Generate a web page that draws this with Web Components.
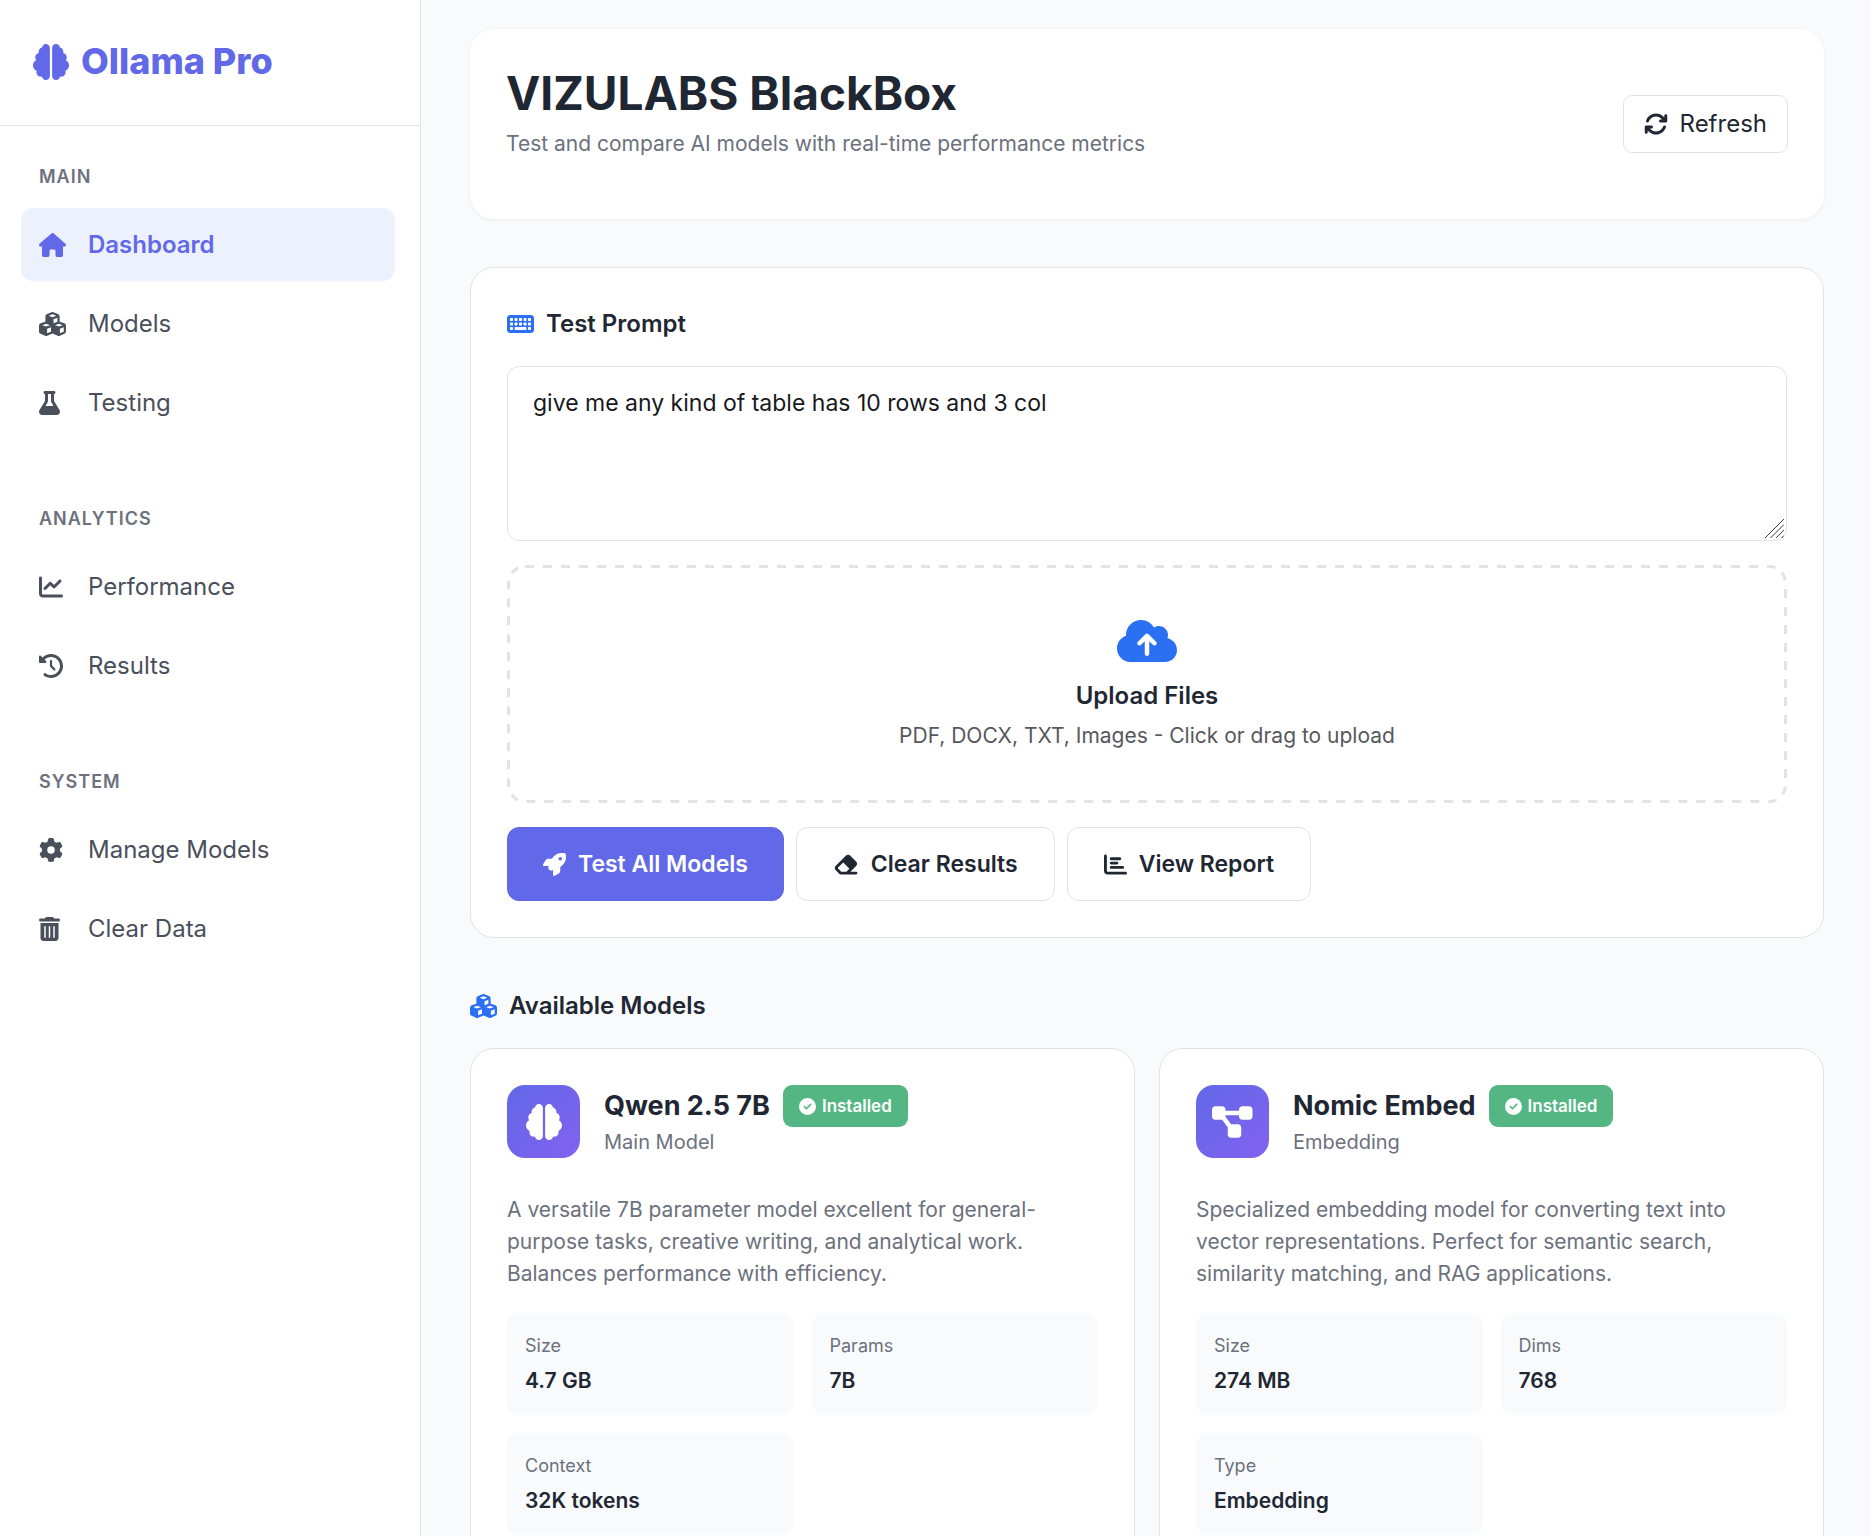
<!DOCTYPE html>
<html lang="en">
<head>
<meta charset="utf-8">
<meta name="viewport" content="width=device-width, initial-scale=1">
<title>Ollama Pro</title>
<style>
  :root {
    --primary: #6169e8;
    --primary-soft: #edf1fd;
    --accent: #2b6ff2;
    --success: #53b683;
    --ink: #1f2733;
    --ink-2: #4a505b;
    --muted: #6c717d;
    --line: #e1e3e7;
    --surface: #ffffff;
    --page: #f9fafc;
  }
  body {
    margin: 0;
    background: var(--page);
    color: var(--ink);
    font-family: Inter, "Liberation Sans", sans-serif;
    font-size: 24px;
  }
</style>
</head>
<body>
<app-shell>
  <side-bar slot="sidebar" brand="Ollama Pro">
    <nav-section label="Main">
      <nav-item icon="house" active>Dashboard</nav-item>
      <nav-item icon="cubes">Models</nav-item>
      <nav-item icon="flask">Testing</nav-item>
    </nav-section>
    <nav-section label="Analytics">
      <nav-item icon="chart-line">Performance</nav-item>
      <nav-item icon="history">Results</nav-item>
    </nav-section>
    <nav-section label="System">
      <nav-item icon="gear">Manage Models</nav-item>
      <nav-item icon="trash">Clear Data</nav-item>
    </nav-section>
  </side-bar>

  <page-header>
    <span slot="title">VIZULABS BlackBox</span>
    <span slot="subtitle">Test and compare AI models with real-time performance metrics</span>
    <ui-button slot="actions" icon="rotate" small>Refresh</ui-button>
  </page-header>

  <prompt-panel>give me any kind of table has 10 rows and 3 col</prompt-panel>

  <model-list>
    <model-card icon="brain" name="Qwen 2.5 7B" kind="Main Model">
      A versatile 7B parameter model excellent for general-purpose tasks, creative writing, and analytical work. Balances performance with efficiency.
      <model-stat slot="stats" label="Size">4.7 GB</model-stat>
      <model-stat slot="stats" label="Params">7B</model-stat>
      <model-stat slot="stats" label="Context">32K tokens</model-stat>
    </model-card>
    <model-card icon="diagram" name="Nomic Embed" kind="Embedding">
      Specialized embedding model for converting text into vector representations. Perfect for semantic search, similarity matching, and RAG applications.
      <model-stat slot="stats" label="Size">274 MB</model-stat>
      <model-stat slot="stats" label="Dims">768</model-stat>
      <model-stat slot="stats" label="Type">Embedding</model-stat>
    </model-card>
  </model-list>
</app-shell>

<script>
;(() => {
  // One rounded key of the keyboard icon
  const key = (x, y, w = 32) =>
    `M${x} ${y}h${w}a16 16 0 0 1 16 16v32a16 16 0 0 1-16 16h-${w}a16 16 0 0 1-16-16v-32a16 16 0 0 1 16-16z`

  const keys = [80, 176, 272, 368, 464]
    .map(x => key(x, 128) + key(x, 224))
    .join("")

  // name: [viewBox width, path]; every icon is 512 high
  const icons = {
    brain: [512, "M184 0c30.9 0 56 25.1 56 56V456c0 30.9-25.1 56-56 56c-28.9 0-52.7-21.9-55.7-50.1c-5.2 1.4-10.7 2.1-16.3 2.1c-35.3 0-64-28.7-64-64c0-7.4 1.3-14.6 3.6-21.2C21.4 367.4 0 338.2 0 304c0-31.9 18.7-59.5 45.8-72.3C37.1 220.8 32 207 32 192c0-30.7 21.6-56.3 50.4-62.6C80.8 123.9 80 118 80 112c0-29.9 20.6-55.1 48.3-62.1C131.3 21.9 155.1 0 184 0zM328 0c28.9 0 52.6 21.9 55.7 49.9c27.8 7 48.3 32.1 48.3 62.1c0 6-.8 11.9-2.4 17.4c28.8 6.2 50.4 31.9 50.4 62.6c0 15-5.1 28.8-13.8 39.7C493.3 244.5 512 272.1 512 304c0 34.2-21.4 63.4-51.6 74.8c2.3 6.6 3.6 13.8 3.6 21.2c0 35.3-28.7 64-64 64c-5.6 0-11.1-.7-16.3-2.1c-3 28.2-26.8 50.1-55.7 50.1c-30.9 0-56-25.1-56-56V56c0-30.9 25.1-56 56-56z"],
    house: [576, "M575.8 255.5c0 18-15 32.1-32 32.1h-32l.7 160.2c0 2.7-.2 5.4-.5 8.1V472c0 22.1-17.9 40-40 40H456c-1.1 0-2.2 0-3.3-.1c-1.4 .1-2.8 .1-4.2 .1H416 392c-22.1 0-40-17.9-40-40V448 384c0-17.7-14.3-32-32-32H256c-17.7 0-32 14.3-32 32v64 24c0 22.1-17.9 40-40 40H160 128.1c-1.5 0-3-.1-4.5-.2c-1.2 .1-2.4 .2-3.6 .2H104c-22.1 0-40-17.9-40-40V360c0-.9 0-1.9 .1-2.8V287.6H32c-18 0-32-14-32-32.1c0-9 3-17 10-24L266.4 8c7-7 15-8 22-8s15 2 21 7L564.8 231.5c8 7 12 15 11 24z"],
    cubes: [576, "M290.8 48.6l78.4 29.7L288 109.5 206.8 78.3l78.4-29.7c1.8-.7 3.8-.7 5.7 0zM136 92.5V204.7c-1.3 .4-2.6 .8-3.9 1.3l-96 36.4C14.4 250.6 0 271.5 0 294.7V413.9c0 22.2 13.1 42.3 33.5 51.3l96 42.2c14.4 6.3 30.7 6.3 45.1 0L288 457.5l113.5 49.9c14.4 6.3 30.7 6.3 45.1 0l96-42.2c20.3-8.9 33.5-29.1 33.5-51.3V294.7c0-23.3-14.4-44.1-36.1-52.4l-96-36.4c-1.3-.5-2.6-.9-3.9-1.3V92.5c0-23.3-14.4-44.1-36.1-52.4l-96-36.4c-12.8-4.8-26.9-4.8-39.7 0l-96 36.4C150.4 48.4 136 69.3 136 92.5zM392 210.6l-82.4 31.2V152.6L392 121v89.6zM154.8 250.9l78.4 29.7L152 311.7 70.8 280.6l78.4-29.7c1.8-.7 3.8-.7 5.7 0zm18.8 204.4V354.8L256 323.2v95.9l-82.4 36.2zM421.2 250.9c1.8-.7 3.8-.7 5.7 0l78.4 29.7L424 311.7l-81.2-31.1 78.4-29.7zM523.2 421.2l-77.6 34.1V354.8L528 323.2v90.7c0 3.2-1.9 6-4.8 7.3z"],
    flask: [448, "M288 0H160 128C110.3 0 96 14.3 96 32s14.3 32 32 32V196.8c0 11.8-3.3 23.5-9.5 33.5L10.3 406.2C3.6 417.2 0 429.7 0 442.6C0 480.9 31.1 512 69.4 512H378.6c38.3 0 69.4-31.1 69.4-69.4c0-12.8-3.6-25.4-10.3-36.4L329.5 230.4c-6.2-10.1-9.5-21.7-9.5-33.5V64c17.7 0 32-14.3 32-32s-14.3-32-32-32H288zM192 196.8V64h64V196.8c0 23.7 6.6 46.9 19 67.1L309.5 320h-171L173 263.9c12.4-20.2 19-43.4 19-67.1z"],
    "chart-line": [512, "M64 64c0-17.7-14.3-32-32-32S0 46.3 0 64V400c0 44.2 35.8 80 80 80H480c17.7 0 32-14.3 32-32s-14.3-32-32-32H80c-8.8 0-16-7.2-16-16V64zm406.6 86.6c12.5-12.5 12.5-32.8 0-45.3s-32.8-12.5-45.3 0L320 210.7l-57.4-57.4c-12.5-12.5-32.8-12.5-45.3 0l-112 112c-12.5 12.5-12.5 32.8 0 45.3s32.8 12.5 45.3 0L240 221.3l57.4 57.4c12.5 12.5 32.8 12.5 45.3 0l128-128z"],
    history: [512, "M75 75L41 41C25.9 25.9 0 36.6 0 57.9V168c0 13.3 10.7 24 24 24H134.1c21.4 0 32.1-25.9 17-41l-30.8-30.8C155 85.5 203 64 256 64c106 0 192 86 192 192s-86 192-192 192c-40.8 0-78.6-12.7-109.7-34.4c-14.5-10.1-34.4-6.6-44.6 7.9s-6.6 34.4 7.9 44.6C151.2 495 201.7 512 256 512c141.4 0 256-114.6 256-256S397.4 0 256 0C185.3 0 121.3 28.7 75 75zm181 53c-13.3 0-24 10.7-24 24V256c0 6.4 2.5 12.5 7 17l72 72c9.4 9.4 24.6 9.4 33.9 0s9.4-24.6 0-33.9l-65-65V152c0-13.3-10.7-24-24-24z"],
    gear: [512, "M495.9 166.6c3.2 8.7 .5 18.4-6.4 24.6l-43.3 39.4c1.1 8.3 1.7 16.8 1.7 25.4s-.6 17.1-1.7 25.4l43.3 39.4c6.9 6.2 9.6 15.9 6.4 24.6c-4.4 11.9-9.7 23.3-15.8 34.3l-4.7 8.1c-6.6 11-14 21.4-22.1 31.2c-5.9 7.2-15.7 9.6-24.5 6.8l-55.7-17.7c-13.4 10.3-28.2 18.9-44 25.4l-12.5 57.1c-2 9.1-9 16.3-18.2 17.8c-13.8 2.3-28 3.5-42.5 3.5s-28.7-1.2-42.5-3.5c-9.2-1.5-16.2-8.7-18.2-17.8l-12.5-57.1c-15.8-6.5-30.6-15.1-44-25.4L83.1 425.9c-8.8 2.8-18.6 .3-24.5-6.8c-8.1-9.8-15.5-20.2-22.1-31.2l-4.7-8.1c-6.1-11-11.4-22.4-15.8-34.3c-3.2-8.7-.5-18.4 6.4-24.6l43.3-39.4C64.6 273.1 64 264.6 64 256s.6-17.1 1.7-25.4L22.4 191.2c-6.9-6.2-9.6-15.9-6.4-24.6c4.4-11.9 9.7-23.3 15.8-34.3l4.7-8.1c6.6-11 14-21.4 22.1-31.2c5.9-7.2 15.7-9.6 24.5-6.8l55.7 17.7c13.4-10.3 28.2-18.9 44-25.4l12.5-57.1c2-9.1 9-16.3 18.2-17.8C227.3 1.2 241.5 0 256 0s28.7 1.2 42.5 3.5c9.2 1.5 16.2 8.7 18.2 17.8l12.5 57.1c15.8 6.5 30.6 15.1 44 25.4l55.7-17.7c8.8-2.8 18.6-.3 24.5 6.8c8.1 9.8 15.5 20.2 22.1 31.2l4.7 8.1c6.1 11 11.4 22.4 15.8 34.3zM256 336a80 80 0 1 0 0-160 80 80 0 1 0 0 160z"],
    trash: [448, "M135.2 17.7C140.6 6.8 151.7 0 163.8 0H284.2c12.1 0 23.2 6.8 28.6 17.7L320 32h96c17.7 0 32 14.3 32 32s-14.3 32-32 32H32C14.3 96 0 81.7 0 64S14.3 32 32 32h96l7.2-14.3zM32 128H416V448c0 35.3-28.7 64-64 64H96c-35.3 0-64-28.7-64-64V128zm96 64c-8.8 0-16 7.2-16 16V432c0 8.8 7.2 16 16 16s16-7.2 16-16V208c0-8.8-7.2-16-16-16zm96 0c-8.8 0-16 7.2-16 16V432c0 8.8 7.2 16 16 16s16-7.2 16-16V208c0-8.8-7.2-16-16-16zm96 0c-8.8 0-16 7.2-16 16V432c0 8.8 7.2 16 16 16s16-7.2 16-16V208c0-8.8-7.2-16-16-16z"],
    rotate: [512, "M105.1 202.6c7.7-21.8 20.2-42.3 37.8-59.8c62.5-62.5 163.8-62.5 226.3 0L386.3 160H352c-17.7 0-32 14.3-32 32s14.3 32 32 32H463.5c0 0 0 0 0 0h.4c17.7 0 32-14.3 32-32V80c0-17.7-14.3-32-32-32s-32 14.3-32 32v35.2L414.4 97.6c-87.5-87.5-229.3-87.5-316.8 0C73.2 122 55.6 150.7 44.8 181.4c-5.9 16.7 2.9 34.9 19.5 40.8s34.9-2.9 40.8-19.5zM39 289.3c-5 1.5-9.8 4.2-13.7 8.2c-4 4-6.7 8.8-8.1 14c-.3 1.2-.6 2.5-.8 3.8c-.3 1.7-.4 3.4-.4 5.1V432c0 17.7 14.3 32 32 32s32-14.3 32-32V396.9l17.6 17.5 0 0c87.5 87.4 229.3 87.4 316.7 0c24.4-24.4 42.1-53.1 52.9-83.7c5.9-16.7-2.9-34.9-19.5-40.8s-34.9 2.9-40.8 19.5c-7.7 21.8-20.2 42.3-37.8 59.8c-62.5 62.5-163.8 62.5-226.3 0l-.1-.1L125.6 352H160c17.7 0 32-14.3 32-32s-14.3-32-32-32H48.4c-1.6 0-3.2 .1-4.8 .3s-3.1 .5-4.6 1z"],
    keyboard: [576, `M64 64C28.7 64 0 92.7 0 128V384c0 35.3 28.7 64 64 64H512c35.3 0 64-28.7 64-64V128c0-35.3-28.7-64-64-64H64z${keys}${key(80, 320)}${key(176, 320, 224)}${key(464, 320)}`],
    "cloud-up": [640, "M144 480C64.5 480 0 415.5 0 336c0-62.8 40.2-116.2 96.2-135.9c-.1-2.7-.2-5.4-.2-8.1c0-88.4 71.6-160 160-160c59.3 0 111 32.2 138.7 80.2C409.9 102 428.3 96 448 96c53 0 96 43 96 96c0 12.2-2.3 23.8-6.4 34.6C596 238.4 640 290.1 640 352c0 70.7-57.3 128-128 128H144zm79-217c-9.4 9.4-9.4 24.6 0 33.9s24.6 9.4 33.9 0l39-39V392c0 13.3 10.7 24 24 24s24-10.7 24-24V257.9l39 39c9.4 9.4 24.6 9.4 33.9 0s9.4-24.6 0-33.9l-80-80c-9.4-9.4-24.6-9.4-33.9 0l-80 80z"],
    rocket: [512, "M156.6 384.9L125.7 354c-8.5-8.5-11.5-20.8-7.7-32.2c3-8.9 7-20.5 11.8-33.8L24 288c-8.6 0-16.6-4.6-20.9-12.1s-4.2-16.7 .2-24.1l52.5-88.5c13-21.9 36.5-35.3 61.9-35.3l82.3 0c2.4-4 4.8-7.7 7.2-11.3C289.1-4.1 411.1-8.1 483.9 5.3c11.6 2.1 20.6 11.2 22.8 22.8c13.4 72.9 9.3 194.8-111.4 276.7c-3.5 2.4-7.3 4.8-11.3 7.2v82.3c0 25.4-13.4 49-35.3 61.9l-88.5 52.5c-7.4 4.4-16.6 4.5-24.1 .2s-12.1-12.2-12.1-20.9V380.8c-14.1 4.9-26.4 8.9-35.7 11.9c-11.2 3.6-23.4 .5-31.8-7.8zM384 168a40 40 0 1 0 0-80 40 40 0 1 0 0 80z"],
    eraser: [576, "M290.7 57.4L57.4 290.7c-25 25-25 65.5 0 90.5l80 80c12 12 28.3 18.7 45.3 18.7H288h9.4H512c17.7 0 32-14.3 32-32s-14.3-32-32-32H387.9L518.6 285.3c25-25 25-65.5 0-90.5L381.3 57.4c-25-25-65.5-25-90.5 0zM297.4 416H288l-105.4 0-80-80L227.3 211.3 364.7 348.7 297.4 416z"],
    "chart-bar": [512, "M32 32c17.7 0 32 14.3 32 32V400c0 8.8 7.2 16 16 16H480c17.7 0 32 14.3 32 32s-14.3 32-32 32H80c-44.2 0-80-35.8-80-80V64C0 46.3 14.3 32 32 32zm96 96c0-17.7 14.3-32 32-32l192 0c17.7 0 32 14.3 32 32s-14.3 32-32 32H160c-17.7 0-32-14.3-32-32zm32 64H288c17.7 0 32 14.3 32 32s-14.3 32-32 32H160c-17.7 0-32-14.3-32-32s14.3-32 32-32zm0 96H416c17.7 0 32 14.3 32 32s-14.3 32-32 32H160c-17.7 0-32-14.3-32-32s14.3-32 32-32z"],
    check: [512, "M256 512A256 256 0 1 0 256 0a256 256 0 1 0 0 512zM369 209L241 337c-9.4 9.4-24.6 9.4-33.9 0l-64-64c-9.4-9.4-9.4-24.6 0-33.9s24.6-9.4 33.9 0l47 47L335 175c9.4-9.4 24.6-9.4 33.9 0s9.4 24.6 0 33.9z"],
    diagram: [576, "M0 80C0 53.5 21.5 32 48 32h96c26.5 0 48 21.5 48 48V96H384V80c0-26.5 21.5-48 48-48h96c26.5 0 48 21.5 48 48v96c0 26.5-21.5 48-48 48H432c-26.5 0-48-21.5-48-48V160H192v16c0 1.7-.1 3.4-.3 5L272 288h96c26.5 0 48 21.5 48 48v96c0 26.5-21.5 48-48 48H272c-26.5 0-48-21.5-48-48V336c0-1.7 .1-3.4 .3-5L144 224H48c-26.5 0-48-21.5-48-48V80z"]
  }

  // Shared base: renders the subclass markup into an open shadow root
  class View extends HTMLElement {
    connectedCallback() {
      if (this.shadowRoot) return
      this.attachShadow({ mode: "open" }).innerHTML = this.render()
    }
    attr(name) {
      return this.getAttribute(name) || ""
    }
  }

  class AppIcon extends View {
    render() {
      const [width, path] = icons[this.attr("name")]
      return `
      <style>
        :host { display: block; flex: none; }
        svg { display: block; height: 1em; fill: currentColor; fill-rule: evenodd; }
      </style>
      <svg viewBox="0 0 ${width} 512" aria-hidden="true"><path d="${path}"/></svg>`
    }
  }

  class AppShell extends View {
    render() {
      return `
      <style>
        :host { display: flex; height: 100vh; overflow: hidden; }
        main {
          flex: 1;
          min-width: 0;
          box-sizing: border-box;
          display: flex;
          flex-direction: column;
          gap: 48px;
          padding: 29px 47px 48px 49px;
          overflow-y: auto;
          scrollbar-width: none;
        }
      </style>
      <slot name="sidebar"></slot>
      <main><slot></slot></main>`
    }
  }

  class SideBar extends View {
    render() {
      return `
      <style>
        :host {
          display: block;
          flex: none;
          box-sizing: border-box;
          width: 421px;
          background: var(--surface);
          border-right: 1px solid var(--line);
        }
        header {
          display: flex;
          align-items: center;
          gap: 12px;
          padding: 32px 33px 34px;
          border-bottom: 1px solid var(--line);
          color: var(--primary);
          font-size: 36px;
          font-weight: 800;
          line-height: 59px;
        }
        nav {
          display: flex;
          flex-direction: column;
          gap: 65px;
          padding: 36px 25px 36px 21px;
        }
      </style>
      <header><app-icon name="brain"></app-icon><span>${this.attr("brand")}</span></header>
      <nav><slot></slot></nav>`
    }
  }

  class NavSection extends View {
    render() {
      return `
      <style>
        :host { display: flex; flex-direction: column; gap: 6px; }
        h2 {
          margin: 0 0 11px;
          padding: 0 18px;
          color: var(--muted);
          font-size: 18px;
          font-weight: 600;
          line-height: 29px;
          letter-spacing: 1px;
          text-transform: uppercase;
        }
      </style>
      <h2>${this.attr("label")}</h2>
      <slot></slot>`
    }
  }

  class NavItem extends View {
    render() {
      return `
      <style>
        :host { display: block; }
        a {
          display: grid;
          grid-template-columns: 31px 1fr;
          gap: 18px;
          align-items: center;
          padding: 17px 18px;
          border-radius: 12px;
          color: var(--ink-2);
          font-size: 24px;
          line-height: 39px;
          text-decoration: none;
        }
        :host([active]) a {
          background: var(--primary-soft);
          color: var(--primary);
          font-weight: 600;
        }
      </style>
      <a href="#"><app-icon name="${this.attr("icon")}"></app-icon><slot></slot></a>`
    }
  }

  class UiButton extends View {
    render() {
      return `
      <style>
        :host { display: block; }
        button {
          display: flex;
          align-items: center;
          gap: 12px;
          padding: 18px 36px;
          border: 1px solid var(--line);
          border-radius: 12px;
          background: var(--surface);
          color: var(--ink);
          font: 600 23px/36px Inter, "Liberation Sans", sans-serif;
          cursor: pointer;
        }
        :host([primary]) button {
          padding: 18px 35px;
          background: var(--primary);
          border-color: var(--primary);
          color: #fff;
        }
        :host([small]) button {
          padding: 10px 20px;
          border-radius: 9px;
          font-size: 24px;
          font-weight: 400;
        }
      </style>
      <button type="button"><app-icon name="${this.attr("icon")}"></app-icon><slot></slot></button>`
    }
  }

  class PageHeader extends View {
    render() {
      return `
      <style>
        :host {
          display: flex;
          align-items: center;
          justify-content: space-between;
          padding: 36px;
          border-radius: 24px;
          background: var(--surface);
          box-shadow: 0 1px 4px rgba(31, 39, 51, 0.06);
        }
        h1 {
          margin: 0 0 6px;
          font-size: 46px;
          font-weight: 700;
          line-height: 56px;
        }
        p {
          margin: 0 0 23px;
          color: var(--muted);
          font-size: 21px;
          line-height: 33px;
        }
      </style>
      <div>
        <h1><slot name="title"></slot></h1>
        <p><slot name="subtitle"></slot></p>
      </div>
      <slot name="actions"></slot>`
    }
  }

  class SectionTitle extends View {
    render() {
      return `
      <style>
        :host { display: block; }
        h2 {
          display: flex;
          align-items: center;
          gap: 12px;
          margin: 0 0 22px;
          font-size: 24px;
          font-weight: 600;
          line-height: 40px;
        }
        app-icon { color: var(--accent); }
      </style>
      <h2><app-icon name="${this.attr("icon")}"></app-icon><slot></slot></h2>`
    }
  }

  class UploadZone extends View {
    render() {
      return `
      <style>
        :host { display: block; }
        label {
          position: relative;
          display: flex;
          flex-direction: column;
          align-items: center;
          padding: 52px 51px 50px;
          border-radius: 18px;
          overflow: hidden;
          cursor: pointer;
        }
        input { display: none; }
        /* the outer half of the stroke is clipped by the label's rounded box */
        .dashes {
          position: absolute;
          inset: 0;
          width: 100%;
          height: 100%;
          fill: none;
          stroke: var(--line);
          stroke-width: 6;
          stroke-dasharray: 9;
        }
        app-icon { color: var(--accent); font-size: 48px; }
        strong { margin: 12px 0 4px; font-size: 24px; font-weight: 600; line-height: 38px; }
        small { color: #56585d; font-size: 21px; line-height: 34px; }
      </style>
      <label>
        <svg class="dashes" aria-hidden="true"><rect width="100%" height="100%" rx="18"/></svg>
        <app-icon name="cloud-up"></app-icon>
        <strong>Upload Files</strong>
        <small>PDF, DOCX, TXT, Images - Click or drag to upload</small>
        <input type="file" multiple>
      </label>`
    }
  }

  class PromptPanel extends View {
    render() {
      return `
      <style>
        :host {
          display: block;
          padding: 36px;
          border: 1px solid var(--line);
          border-radius: 24px;
          background: var(--surface);
        }
        .field { position: relative; margin-bottom: 24px; }
        textarea {
          display: block;
          box-sizing: border-box;
          width: 100%;
          height: 175px;
          padding: 19px 25px;
          border: 1px solid var(--line);
          border-radius: 12px;
          background: var(--surface);
          color: #17191d;
          font: 400 23px/34px Inter, "Liberation Sans", sans-serif;
          resize: vertical;
        }
        textarea::-webkit-resizer { background: transparent; }
        .grip {
          position: absolute;
          right: 3px;
          bottom: 3px;
          width: 19px;
          height: 19px;
          stroke: #3c3e42;
          pointer-events: none;
        }
        .actions { display: flex; gap: 12px; margin-top: 24px; }
      </style>
      <section-title icon="keyboard"><label for="prompt">Test Prompt</label></section-title>
      <div class="field">
        <textarea id="prompt">${this.textContent.trim()}</textarea>
        <svg class="grip" viewBox="0 0 19 19" aria-hidden="true"><path d="M0 19L19 0M5.5 19L19 5.5M11 19L19 11M16.5 19L19 16.5"/></svg>
      </div>
      <upload-zone></upload-zone>
      <div class="actions">
        <ui-button icon="rocket" primary>Test All Models</ui-button>
        <ui-button icon="eraser">Clear Results</ui-button>
        <ui-button icon="chart-bar">View Report</ui-button>
      </div>`
    }
  }

  class ModelList extends View {
    render() {
      return `
      <style>
        :host { display: block; }
        .grid {
          display: grid;
          grid-template-columns: 1fr 1fr;
          gap: 24px;
        }
      </style>
      <section-title icon="cubes">Available Models</section-title>
      <div class="grid"><slot></slot></div>`
    }
  }

  class ModelCard extends View {
    render() {
      return `
      <style>
        :host {
          display: block;
          padding: 36px;
          border: 1px solid var(--line);
          border-radius: 24px;
          background: var(--surface);
        }
        header { display: flex; gap: 24px; margin-bottom: 36px; }
        .tile {
          display: flex;
          flex: none;
          align-items: center;
          justify-content: center;
          width: 73px;
          height: 73px;
          border-radius: 18px;
          background: linear-gradient(135deg, #6169e8, #8361ee);
          color: #fff;
          font-size: 36px;
        }
        h3 {
          display: flex;
          align-items: center;
          gap: 13px;
          margin: 0;
          font-size: 27px;
          font-weight: 700;
          line-height: 42px;
        }
        .badge {
          display: flex;
          align-items: center;
          gap: 6px;
          padding: 0 16px;
          border-radius: 9px;
          background: var(--success);
          color: #fff;
          font-size: 17px;
          font-weight: 600;
        }
        .kind { color: var(--muted); font-size: 20px; line-height: 31px; }
        p { margin: 0 0 23px; color: var(--muted); font-size: 21px; line-height: 32px; }
        .stats {
          display: grid;
          grid-template-columns: 1fr 1fr;
          gap: 18px;
        }
      </style>
      <header>
        <div class="tile"><app-icon name="${this.attr("icon")}"></app-icon></div>
        <div>
          <h3>${this.attr("name")} <span class="badge"><app-icon name="check"></app-icon>Installed</span></h3>
          <div class="kind">${this.attr("kind")}</div>
        </div>
      </header>
      <p><slot></slot></p>
      <div class="stats"><slot name="stats"></slot></div>`
    }
  }

  class ModelStat extends View {
    render() {
      return `
      <style>
        :host {
          display: block;
          padding: 18px;
          border-radius: 12px;
          background: var(--page);
        }
        .label { margin-bottom: 5px; color: var(--muted); font-size: 18px; line-height: 29px; }
        .value { font-size: 21px; font-weight: 600; line-height: 32px; }
      </style>
      <div class="label">${this.attr("label")}</div>
      <div class="value"><slot></slot></div>`
    }
  }

  customElements.define("app-icon", AppIcon)
  customElements.define("app-shell", AppShell)
  customElements.define("side-bar", SideBar)
  customElements.define("nav-section", NavSection)
  customElements.define("nav-item", NavItem)
  customElements.define("ui-button", UiButton)
  customElements.define("page-header", PageHeader)
  customElements.define("section-title", SectionTitle)
  customElements.define("upload-zone", UploadZone)
  customElements.define("prompt-panel", PromptPanel)
  customElements.define("model-list", ModelList)
  customElements.define("model-card", ModelCard)
  customElements.define("model-stat", ModelStat)
})()
</script>
</body>
</html>
